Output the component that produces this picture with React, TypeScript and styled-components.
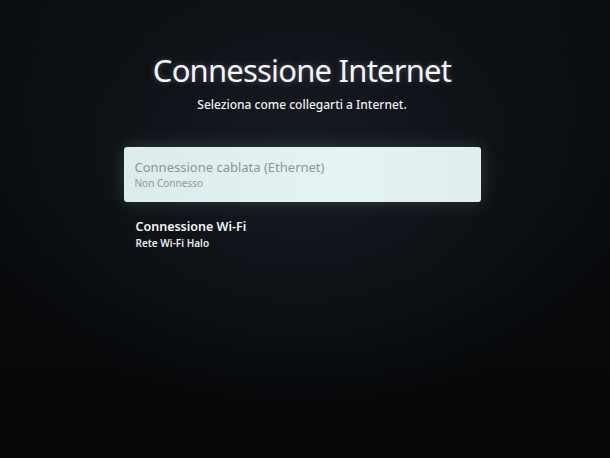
import React from "react";
import styled, { createGlobalStyle } from "styled-components";

const GlobalStyle = createGlobalStyle`
  html, body {
    margin: 0;
    padding: 0;
    background: #07090c;
  }
  body {
    font-family: "Noto Sans", "Open Sans", sans-serif;
  }
`;

// ─── Screen ───────────────────────────────────────────────────────────────────

const Screen = styled.main`
  width: 610px;
  height: 458px;
  box-sizing: border-box;
  padding: 48px 6px 0 0;
  overflow: hidden;
  display: flex;
  flex-direction: column;
  align-items: center;
  background:
    radial-gradient(ellipse 340px 260px at 300px 150px, #161b23 0%, #0e1217 55%, rgba(7, 9, 12, 0) 100%),
    linear-gradient(180deg, #0b0e12 0%, #07090b 70%, #050607 100%);
`;

const Title = styled.h1`
  margin: 0;
  font-size: 31px;
  font-weight: 400;
  line-height: 44px;
  letter-spacing: -0.8px;
  color: #f4f6f8;
  text-shadow: 0 0 6px rgba(255, 255, 255, 0.25);
`;

const Subtitle = styled.p`
  margin: 4px 0 0;
  font-size: 12px;
  font-weight: 500;
  line-height: 18px;
  color: #eef0f2;
`;

// ─── Options list ─────────────────────────────────────────────────────────────

const OptionList = styled.ul`
  list-style: none;
  margin: 33px 0 0;
  padding: 0;
  width: 357px;
  display: flex;
  flex-direction: column;
  gap: 16px;
`;

const Option = styled.li<{ $focused?: boolean }>`
  box-sizing: border-box;
  height: ${({ $focused }) => ($focused ? "55px" : "auto")};
  padding: ${({ $focused }) => ($focused ? "9px 11px 11px" : "0 12px")};
  border-radius: 3px;
  display: flex;
  flex-direction: column;
  justify-content: center;
  background: ${({ $focused }) =>
    $focused ? "linear-gradient(90deg, #dcebec 0%, #e6f3f3 60%, #e0eeef 100%)" : "transparent"};
  box-shadow: ${({ $focused }) =>
    $focused ? "0 0 18px rgba(200, 230, 235, 0.18)" : "none"};
`;

const OptionTitle = styled.span<{ $focused?: boolean }>`
  font-size: ${({ $focused }) => ($focused ? "13px" : "12.5px")};
  font-weight: ${({ $focused }) => ($focused ? 400 : 600)};
  line-height: 18px;
  color: ${({ $focused }) => ($focused ? "#8a9699" : "#f4f6f8")};
`;

const OptionDetail = styled.span<{ $focused?: boolean }>`
  font-size: 10px;
  font-weight: ${({ $focused }) => ($focused ? 400 : 600)};
  line-height: 14px;
  color: ${({ $focused }) => ($focused ? "#8f9a9d" : "#e8ebee")};
`;

export default function App(): React.ReactElement {
  return (
    <>
      <GlobalStyle />
      <Screen>
        <Title>Connessione Internet</Title>
        <Subtitle>Seleziona come collegarti a Internet.</Subtitle>
        <OptionList>
          <Option $focused>
            <OptionTitle $focused>Connessione cablata (Ethernet)</OptionTitle>
            <OptionDetail $focused>Non Connesso</OptionDetail>
          </Option>
          <Option>
            <OptionTitle>Connessione Wi-Fi</OptionTitle>
            <OptionDetail>Rete Wi-Fi Halo</OptionDetail>
          </Option>
        </OptionList>
      </Screen>
    </>
  );
}
